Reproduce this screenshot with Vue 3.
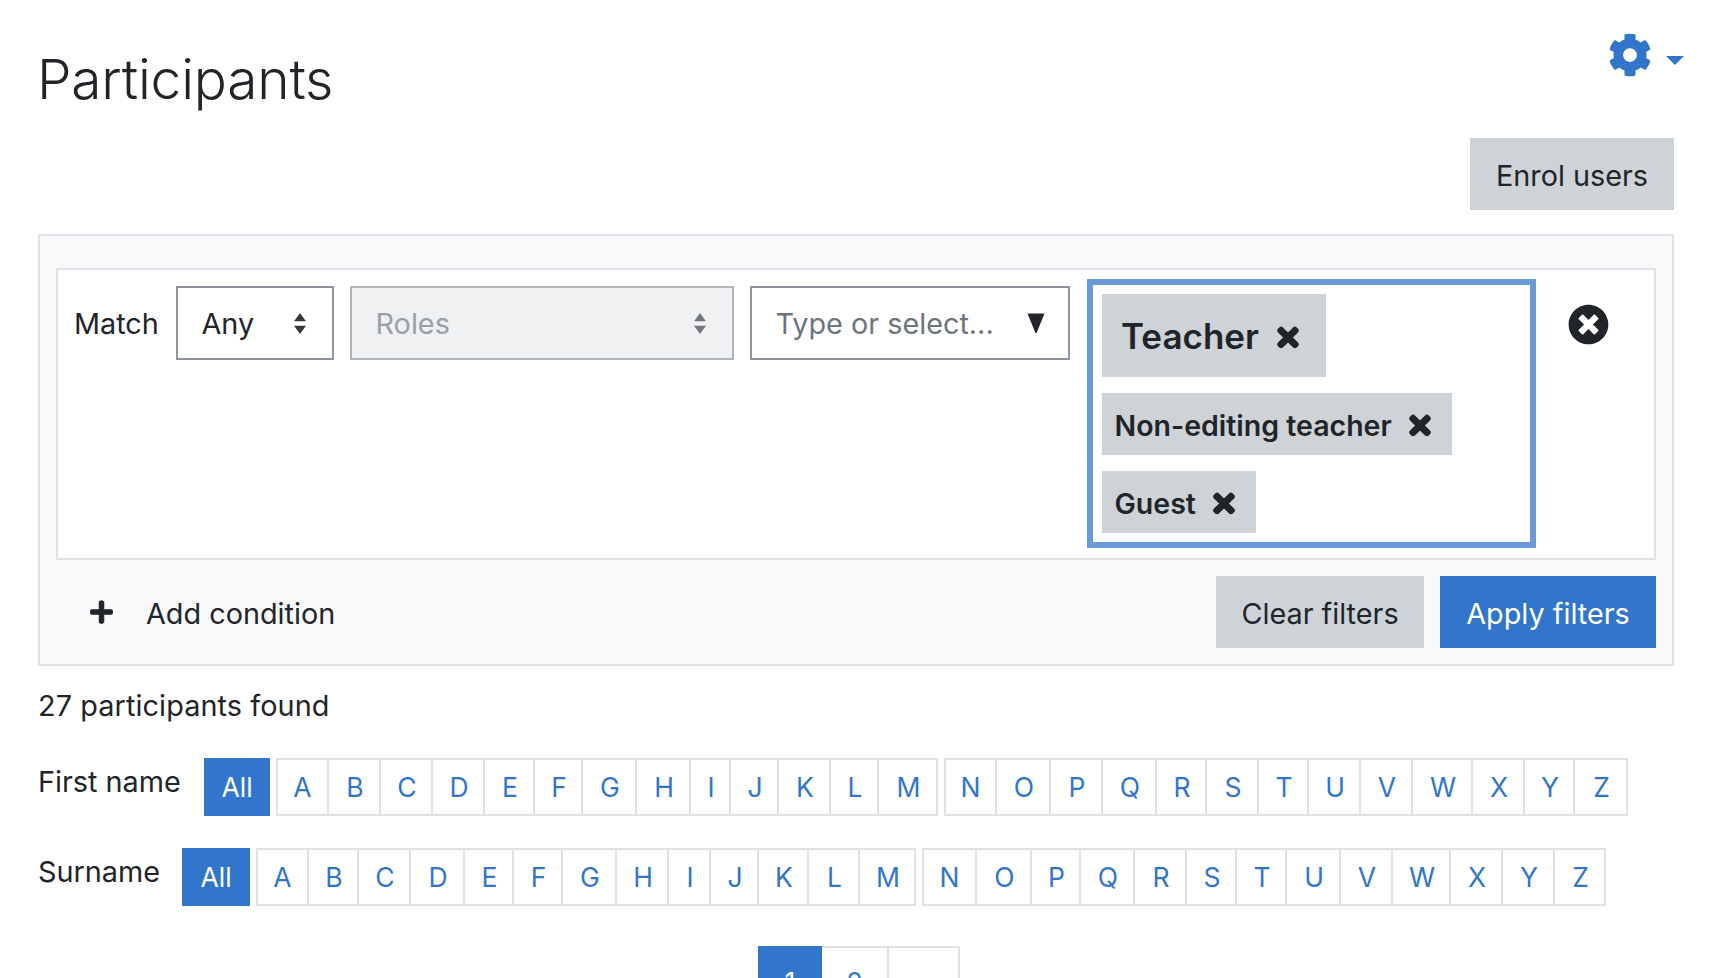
<script setup>
const firstWidths = [53, 52, 52, 52, 50, 48, 54, 54, 40, 48, 52, 48, 59, 53, 54, 52, 54, 50, 52, 50, 52, 52, 60, 52, 50, 53]
const lastWidths = [53, 50, 52, 54, 49, 49, 54, 52, 42, 48, 50, 51, 56, 55, 55, 49, 54, 52, 50, 50, 54, 52, 58, 52, 52, 51]
const alphabet = 'ABCDEFGHIJKLMNOPQRSTUVWXYZ'.split('')
const cellsFor = (widths, from, to) => alphabet.slice(from, to).map((l, i) => ({ l, w: widths[from + i] }))
const bars = [
  { label: 'First name', cls: 'first', groups: [cellsFor(firstWidths, 0, 13), cellsFor(firstWidths, 13, 26)] },
  { label: 'Surname', cls: 'last', groups: [cellsFor(lastWidths, 0, 13), cellsFor(lastWidths, 13, 26)] }
]
const tags = [
  { text: 'Teacher', big: true },
  { text: 'Non-editing teacher', big: false },
  { text: 'Guest', big: false }
]
const timesPath = 'M242.72 256l100.07-100.07c12.28-12.28 12.28-32.19 0-44.48l-22.24-22.24c-12.28-12.28-32.19-12.28-44.48 0L176 189.28 75.93 89.21c-12.28-12.28-32.19-12.28-44.48 0L9.21 111.45c-12.28 12.28-12.28 32.19 0 44.48L109.28 256 9.21 356.07c-12.28 12.28-12.28 32.19 0 44.48l22.24 22.24c12.28 12.28 32.2 12.28 44.48 0L176 322.72l100.07 100.07c12.28 12.28 32.2 12.28 44.48 0l22.24-22.24c12.28-12.28 12.28-32.19 0-44.48L242.72 256z'
</script>

<template>
  <div class="page">
    <header class="head">
      <h1>Participants</h1>
      <div class="cog">
        <svg class="gear" viewBox="0 0 512 512"><path d="M487.4 315.7l-42.6-24.6c4.3-23.2 4.3-47 0-70.2l42.6-24.6c4.9-2.8 7.1-8.6 5.5-14-11.1-35.6-30-67.8-54.7-94.6-3.8-4.1-10-5.1-14.8-2.3L380.8 110c-17.9-15.4-38.5-27.3-60.8-35.1V25.8c0-5.6-3.9-10.5-9.4-11.7-36.7-8.2-74.3-7.8-109.2 0-5.5 1.2-9.4 6.1-9.4 11.7V75c-22.2 7.9-42.8 19.8-60.8 35.1L88.7 85.5c-4.9-2.8-11-1.9-14.8 2.3-24.7 26.7-43.6 58.9-54.7 94.6-1.7 5.4.6 11.2 5.5 14L67.3 221c-4.3 23.2-4.3 47 0 70.2l-42.6 24.6c-4.9 2.8-7.1 8.6-5.5 14 11.1 35.6 30 67.8 54.7 94.6 3.8 4.1 10 5.1 14.8 2.3l42.6-24.6c17.9 15.4 38.5 27.3 60.8 35.1v49.2c0 5.6 3.9 10.5 9.4 11.7 36.7 8.2 74.3 7.8 109.2 0 5.5-1.2 9.4-6.1 9.4-11.7v-49.2c22.2-7.9 42.8-19.8 60.8-35.1l42.6 24.6c4.9 2.8 11 1.9 14.8-2.3 24.7-26.7 43.6-58.9 54.7-94.6 1.5-5.5-.7-11.3-5.6-14.1zM256 336c-44.1 0-80-35.9-80-80s35.9-80 80-80 80 35.9 80 80-35.9 80-80 80z" /></svg>
        <span class="caret"></span>
      </div>
    </header>

    <div class="enrol-row">
      <button class="btn grey enrol">Enrol users</button>
    </div>

    <section class="panel">
      <div class="filter">
        <span class="match">Match</span>
        <div class="sel any">
          <span>Any</span>
          <svg class="updown" viewBox="0 0 16 28"><path d="M8 0l8 11H0zM8 28L0 17h16z" /></svg>
        </div>
        <div class="sel roles">
          <span>Roles</span>
          <svg class="updown" viewBox="0 0 16 28"><path d="M8 0l8 11H0zM8 28L0 17h16z" /></svg>
        </div>
        <div class="sel type">
          <span>Type or select...</span>
          <svg class="tri" viewBox="0 0 18 20"><path d="M0.5 0.5h17L10 19a1 1 0 0 1-2 0z" /></svg>
        </div>
        <div class="tagbox">
          <div v-for="t in tags" :key="t.text" class="tag" :class="{ big: t.big }">
            <span>{{ t.text }}</span>
            <svg class="x" viewBox="0 0 352 512"><path :d="timesPath" /></svg>
          </div>
        </div>
        <svg class="remove" viewBox="0 0 512 512"><path d="M256 8C119 8 8 119 8 256s111 248 248 248 248-111 248-248S393 8 256 8zm121.6 313.1c4.7 4.7 4.7 12.3 0 17L338 377.6c-4.7 4.7-12.3 4.7-17 0L256 312l-65.1 65.6c-4.7 4.7-12.3 4.7-17 0L134.4 338c-4.7-4.7-4.7-12.3 0-17l65.6-65-65.6-65.1c-4.7-4.7-4.7-12.3 0-17l39.6-39.6c4.7-4.7 12.3-4.7 17 0l65 65.7 65.1-65.6c4.7-4.7 12.3-4.7 17 0l39.6 39.6c4.7 4.7 4.7 12.3 0 17L312 256l65.6 65.1z" /></svg>
      </div>
      <div class="actions">
        <div class="add">
          <svg class="plus" viewBox="0 0 448 512"><path d="M416 208H272V64c0-17.67-14.33-32-32-32h-32c-17.67 0-32 14.33-32 32v144H32c-17.67 0-32 14.33-32 32v32c0 17.67 14.33 32 32 32h144v144c0 17.67 14.33 32 32 32h32c17.67 0 32-14.33 32-32V304h144c17.67 0 32-14.33 32-32v-32c0-17.67-14.33-32-32-32z" /></svg>
          <span>Add condition</span>
        </div>
        <button class="btn grey clear">Clear filters</button>
        <button class="btn blue apply">Apply filters</button>
      </div>
    </section>

    <p class="count">27 participants found</p>

    <div v-for="b in bars" :key="b.label" class="initials" :class="b.cls">
      <span class="ilabel">{{ b.label }}</span>
      <a class="all">All</a>
      <div v-for="(g, gi) in b.groups" :key="gi" class="group">
        <a v-for="c in g" :key="c.l" class="cell" :style="{ width: c.w + 'px' }">{{ c.l }}</a>
      </div>
    </div>

    <nav class="pager">
      <a class="pg on">1</a>
      <a class="pg two">2</a>
      <a class="pg more">…</a>
    </nav>
  </div>
</template>

<style>
html, body { margin: 0; overflow: hidden; background: #fff; }
</style>

<style scoped>
.page {
  height: 978px;
  box-sizing: border-box;
  padding: 0 38px;
  font-family: Inter, "Noto Sans", sans-serif;
  font-size: 28.8px;
  color: #212529;
  overflow: hidden;
}
.head {
  height: 138px;
  display: flex;
  justify-content: space-between;
  align-items: flex-start;
}
h1 {
  margin: 43px 0 0 -1px;
  font-size: 55px;
  line-height: 72px;
  font-weight: 300;
  letter-spacing: -0.2px;
}
.cog {
  display: flex;
  align-items: center;
  margin: 33px -10px 0 0;
  height: 44px;
}
.gear { width: 44px; height: 44px; fill: #3176cb; }
.caret {
  margin: 10px 0 0 14px;
  border-left: 9px solid transparent;
  border-right: 9px solid transparent;
  border-top: 9px solid #3176cb;
}
.enrol-row { display: flex; justify-content: flex-end; height: 96px; }
.btn {
  box-sizing: border-box;
  height: 72px;
  border: 0;
  padding: 3px 0 0;
  font: inherit;
  color: inherit;
  border-radius: 0;
}
.grey { background: #ced3d8; }
.blue { background: #3176cb; color: #fff; }
.enrol { width: 204px; }
.clear { width: 208px; margin-right: 16px; }
.apply { width: 216px; }
.panel {
  box-sizing: border-box;
  height: 432px;
  border: 2px solid #dee2e6;
  background: #f8f9fa;
  padding: 32px 16px 15px;
}
.filter {
  box-sizing: border-box;
  height: 292px;
  border: 2px solid #dee2e6;
  background: #fff;
  display: flex;
  align-items: flex-start;
  padding: 16px 0 0 16px;
}
.match { line-height: 76px; width: 86px; flex: none; margin-right: 16px; }
.sel {
  box-sizing: border-box;
  height: 74px;
  border: 2px solid #8f959e;
  display: flex;
  align-items: center;
  justify-content: space-between;
  padding: 1px 24px 0 23.5px;
  margin-right: 16px;
  flex: none;
}
.sel .updown { margin-top: -1px; }
.any { width: 158px; }
.roles {
  width: 384px;
  background: #f0f1f3;
  border-color: #b0b4bb;
  color: #9aa0a6;
}
.roles .updown { fill: #74787c; }
.type { width: 320px; color: #6c757d; margin-right: 17px; padding-right: 23px; }
.updown { width: 16px; height: 21px; fill: #343a40; }
.tri { width: 18px; height: 20px; fill: #212529; margin-top: -1px; }
.tagbox {
  box-sizing: border-box;
  width: 449px;
  height: 269px;
  margin-top: -7px;
  border: 6px solid #6a9ada;
  background: #fff;
  padding: 9px;
  display: flex;
  flex-direction: column;
  align-items: flex-start;
  gap: 16px;
  flex: none;
}
.tag {
  box-sizing: border-box;
  height: 62.5px;
  background: #ced3d8;
  display: flex;
  align-items: center;
  padding: 3px 22px 0 12.5px;
  font-weight: 600;
  font-size: 28.5px;
  gap: 18px;
}
.tag.big { height: 84px; font-size: 35px; padding: 0 28px 0 19px; gap: 19px; }
.tag.big .x { margin-top: 3px; }
.x { width: 20px; height: 29px; fill: #212529; stroke: #212529; stroke-width: 30; overflow: visible; }
.remove { width: 41px; height: 41px; margin: 18px 0 0 32px; fill: #212529; flex: none; }
.actions { display: flex; align-items: center; padding-top: 16px; }
.add { flex: 1; display: flex; align-items: center; padding: 3px 0 0 34px; gap: 33px; }
.plus { width: 23px; height: 26px; fill: #212529; stroke: #212529; stroke-width: 12; margin-top: -3px; }
.count { margin: 0; padding-top: 20px; line-height: 40px; height: 92px; box-sizing: border-box; letter-spacing: 0.1px; }
.initials { display: flex; height: 58px; align-items: flex-start; }
.initials.first { margin-bottom: 32px; }
.initials.last { margin-bottom: 40px; }
.ilabel { line-height: 48px; }
.first .ilabel { width: 166px; }
.last .ilabel { width: 144px; }
.all {
  height: 58px;
  background: #3176cb;
  color: #fff;
  display: flex;
  align-items: center;
  justify-content: center;
  font-size: 26.5px;
  margin-right: 6px;
}
.first .all { width: 66px; }
.last .all { width: 68px; }
.group { display: flex; margin-right: 6px; border: solid #dee2e6; border-width: 2px 0 2px 2px; }
.cell {
  box-sizing: border-box;
  height: 54px;
  border-right: 2px solid #dee2e6;
  padding-left: 2px;
  color: #3176cb;
  font-size: 26.5px;
  display: flex;
  align-items: center;
  justify-content: center;
}
.group .cell:first-child { margin-left: -2px; }
.pager { display: flex; justify-content: center; margin-left: 6px; font-size: 26.5px; }
.pg {
  box-sizing: border-box;
  height: 72px;
  border: solid #dee2e6;
  border-width: 2px 2px 2px 0;
  display: flex;
  align-items: center;
  justify-content: center;
  color: #3176cb;
}
.on { width: 64px; background: #3176cb; color: #fff; border: 0; }
.two { width: 67px; }
.more { width: 71px; }
</style>
